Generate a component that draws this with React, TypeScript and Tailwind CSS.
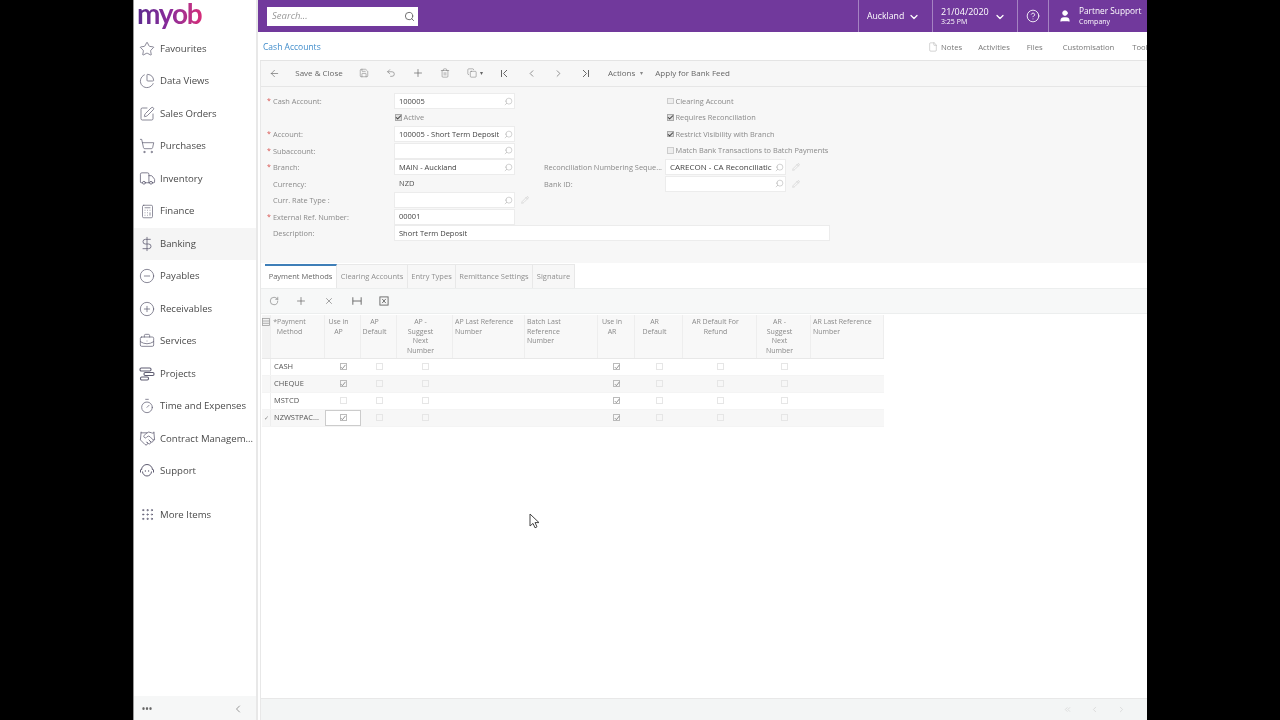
import React from "react";
import {
  Star, ChartPie, SquarePen, ShoppingCart, Truck, Calculator, DollarSign, CircleMinus, CirclePlus,
  BriefcaseBusiness, Timer, Handshake, Grip, Search, ChevronDown, CircleHelp, User, File, Save, Undo2, Plus,
  Trash2, Copy, ChevronsLeft, ChevronLeft, ChevronRight, ArrowLeft, RotateCw, X, Pencil, Check,
} from "lucide-react";

const ProjectsIcon = () => (
  <svg width="18" height="18" viewBox="0 0 18 18" fill="none" stroke="#5f5d72" strokeWidth="1.1">
    <rect x="2" y="3" width="11" height="3" rx="1.2" /><rect x="6" y="7.5" width="10" height="3" rx="1.2" /><rect x="2.5" y="12" width="8" height="3" rx="1.2" />
  </svg>
);
const SupportIcon = () => (
  <svg width="18" height="18" viewBox="0 0 18 18" fill="none" stroke="#5f5d72" strokeWidth="1">
    <path d="M3.5 8a5.5 5.5 0 0 1 11 0" /><path d="M4.5 9.5a4.5 4.5 0 0 0 9 0" /><path d="M2.5 7.5v3M15.5 7.5v3" />
    <circle cx="7.3" cy="9" r=".3" /><circle cx="10.7" cy="9" r=".3" />
  </svg>
);
const FitIcon = () => (
  <svg width="10" height="10" viewBox="0 0 12 12" fill="none" stroke="#666" strokeWidth="1.1"><path d="M1 1.5v9M11 1.5v9M1 6h10" /></svg>
);
const ExcelIcon = () => (
  <svg width="10" height="10" viewBox="0 0 11 11" fill="none" stroke="#666" strokeWidth="1"><rect x="1" y="1" width="9" height="9" /><path d="M3.5 3.2l4 4.6M7.5 3.2l-4 4.6" /></svg>
);
const GridMenuIcon = () => (
  <svg width="8" height="8" viewBox="0 0 8 8" fill="none" stroke="#a0a0a0" strokeWidth="0.8"><rect x=".5" y=".5" width="7" height="7" /><path d="M.5 3h7M.5 5.3h7" /></svg>
);

const navItems: [string, React.ReactNode, string?][] = [
  ["Favourites", <Star size={16} strokeWidth={1.1} />],
  ["Data Views", <ChartPie size={16} strokeWidth={1.1} />],
  ["Sales Orders", <SquarePen size={16} strokeWidth={1.1} />],
  ["Purchases", <ShoppingCart size={16} strokeWidth={1.1} />],
  ["Inventory", <Truck size={17} strokeWidth={1.1} />],
  ["Finance", <Calculator size={15} strokeWidth={1.1} />],
  ["Banking", <DollarSign size={16} strokeWidth={1.2} />, "bg-[#f5f5f5]"],
  ["Payables", <CircleMinus size={16} strokeWidth={1.1} />],
  ["Receivables", <CirclePlus size={16} strokeWidth={1.1} />],
  ["Services", <BriefcaseBusiness size={16} strokeWidth={1.1} />],
  ["Projects", <ProjectsIcon />],
  ["Time and Expenses", <Timer size={16} strokeWidth={1.1} />],
  ["Contract Managem...", <Handshake size={17} strokeWidth={1.1} />],
  ["Support", <SupportIcon />],
];

const NavRow = ({ label, icon, cls = "" }: { label: string; icon: React.ReactNode; cls?: string }) => (
  <div className={`flex h-[32.5px] shrink-0 items-center ${cls}`}>
    <span className="flex w-[26px] shrink-0 justify-center text-[#5f5d72]">{icon}</span>
    <span className="whitespace-nowrap text-[9.6px] text-[#4a4a4a]">{label}</span>
  </div>
);

const Sidebar = () => (
  <aside className="flex h-full w-[123px] shrink-0 flex-col border-l border-[#999] bg-white">
    <div className="flex h-[32.5px] shrink-0 items-center pb-[7px] pl-[3px]">
      <span className="bg-gradient-to-r from-[#5b2a8e] via-[#8a2a9a] to-[#d62b78] bg-clip-text font-['Lato',sans-serif] text-[28px] font-bold leading-[36px] tracking-[-1.2px] text-transparent">myob</span>
    </div>
    {navItems.map(([l, i, c]) => <NavRow key={l} label={l} icon={i} cls={c} />)}
    <div className="mt-[11px]"><NavRow label="More Items" icon={<Grip size={15} strokeWidth={1.3} />} /></div>
    <div className="mt-auto flex h-[24px] items-center justify-between bg-[#f6f7f7] pl-[8px] pr-[12px] pt-[1px] text-[#666]">
      <span className="text-[8px] font-bold leading-none tracking-[0.5px]">•••</span>
      <ChevronLeft size={12} strokeWidth={1.3} />
    </div>
  </aside>
);

const Header = () => (
  <header className="flex h-[32px] shrink-0 items-center bg-[#71399c] text-white">
    <div className="ml-[9px] flex h-[19px] w-[151px] items-center justify-between bg-white pl-[5px] pr-[3px]">
      <span className="text-[9.5px] italic text-[#999]">Search...</span>
      <Search size={11} className="text-[#666]" />
    </div>
    <div className="ml-[440px] flex h-full w-[74px] items-center border-l border-[#a583c2] pl-[8px] pt-[2px]">
      <span className="text-[8.7px]">Auckland</span>
      <ChevronDown size={12} strokeWidth={2.5} className="ml-[4px]" />
    </div>
    <div className="flex h-full w-[85px] items-center border-l border-[#a583c2] pl-[8px]">
      <div className="w-[53px] leading-none">
        <div className="text-[9px]">21/04/2020</div>
        <div className="mt-[2px] text-[7px]">3:25 PM</div>
      </div>
      <ChevronDown size={12} strokeWidth={2.5} className="mt-[2px]" />
    </div>
    <div className="flex h-full w-[32px] items-center justify-center border-x border-[#a583c2]">
      <CircleHelp size={14} strokeWidth={1.5} />
    </div>
    <div className="flex h-full flex-1 items-center overflow-hidden pl-[9px]">
      <User size={14} fill="white" strokeWidth={1.5} />
      <div className="ml-[7px] whitespace-nowrap leading-none">
        <div className="text-[8.3px]">Partner Support</div>
        <div className="mt-[2px] text-[7px]">Company</div>
      </div>
    </div>
  </header>
);

const TitleRow = () => (
  <div className="flex h-[29px] shrink-0 items-center overflow-hidden whitespace-nowrap border-b border-[#e4e4e4] bg-white pl-[3px] pt-[3px] text-[7.7px] text-[#777]">
    <span className="w-[665px] shrink-0 text-[8.5px] text-[#3f8ccb]">Cash Accounts</span>
    <div className="flex items-center">
      <File size={10} strokeWidth={1} className="text-[#999]" />
      <span className="ml-[3px]">Notes</span>
      <span className="ml-[16px]">Activities</span>
      <span className="ml-[17px]">Files</span>
      <span className="ml-[20px]">Customisation</span>
      <span className="ml-[18px]">Tools</span>
    </div>
  </div>
);

const TB = ({ children, w = "w-[27px]" }: { children: React.ReactNode; w?: string }) => (
  <span className={`flex ${w} shrink-0 items-center justify-center text-[#666]`}>{children}</span>
);

const Toolbar = () => (
  <div className="flex h-[26px] shrink-0 items-center border-b border-[#e6e6e6] pb-[1px] text-[8px] text-[#666]">
    <TB><ArrowLeft size={11} strokeWidth={1.4} /></TB>
    <TB w="w-[62px]"><span className="whitespace-nowrap text-[#666]">Save &amp; Close</span></TB>
    <TB><Save size={10} strokeWidth={1.1} /></TB>
    <TB><Undo2 size={10} strokeWidth={1.3} /></TB>
    <TB><Plus size={12} strokeWidth={1.4} /></TB>
    <TB><Trash2 size={10} strokeWidth={1.1} /></TB>
    <TB w="w-[33px]"><Copy size={10} strokeWidth={1.1} /><span className="ml-[3px] text-[6px]">▾</span></TB>
    <TB><svg width="9" height="9" viewBox="0 0 9 9" fill="none" stroke="currentColor" strokeWidth="1"><path d="M1.5 1v7M7 1 3.5 4.5 7 8" /></svg></TB>
    <TB><ChevronLeft size={11} strokeWidth={1.5} /></TB>
    <TB><ChevronRight size={11} strokeWidth={1.5} /></TB>
    <TB><svg width="9" height="9" viewBox="0 0 9 9" fill="none" stroke="currentColor" strokeWidth="1"><path d="M7.5 1v7M2 1l3.5 3.5L2 8" /></svg></TB>
    <span className="ml-[9px]">Actions</span>
    <span className="ml-[5px] text-[6px] text-[#888]">▾</span>
    <span className="ml-[12px]">Apply for Bank Feed</span>
  </div>
);

const Label = ({ text, req, cls = "w-[127px]" }: { text: string; req?: boolean; cls?: string }) => (
  <div className={`flex ${cls} shrink-0 items-center overflow-hidden whitespace-nowrap pt-[1px] text-[7.4px] text-[#8a8a8a]`}>
    <span className="w-[6px] shrink-0 text-[7px] text-[#d9534f]">{req ? "*" : ""}</span>
    <span>{text}</span>
  </div>
);

const Input = ({ value, search = true, w = "w-[121px]", pencil, txt = "text-[7.5px]" }: { value?: string; search?: boolean; w?: string; pencil?: boolean; txt?: string }) => (
  <>
    <div className={`flex h-[16px] ${w} shrink-0 items-center justify-between overflow-hidden border border-[#ececec] bg-white pl-[4px] pr-[1px]`}>
      <span className={`min-w-0 overflow-hidden whitespace-nowrap ${txt} text-[#444]`}>{value}</span>
      {search && <Search size={9} strokeWidth={1} className="ml-[1px] shrink-0 -scale-x-100 text-[#888]" />}
    </div>
    {pencil && <Pencil size={8} strokeWidth={1} className="ml-[6px] text-[#aaa]" />}
  </>
);

const Row = ({ children, cls = "" }: { children: React.ReactNode; cls?: string }) => (
  <div className={`flex h-[16.5px] items-center ${cls}`}>{children}</div>
);

const FormCheck = ({ on, text }: { on?: boolean; text: string }) => (
  <div className="flex items-center whitespace-nowrap text-[7.4px] text-[#8a8a8a]">
    <span className={`flex h-[6.5px] w-[6.5px] items-center justify-center border ${on ? "border-[#aaa] bg-[#ddd]" : "border-[#ccc] bg-[#eee]"}`}>
      {on && <Check size={7} strokeWidth={3.5} className="shrink-0 text-[#444]" />}
    </span>
    <span className="ml-[2px]">{text}</span>
  </div>
);

const Form = () => (
  <div className="flex h-[176px] shrink-0 flex-col pl-[6px] pt-[6px]">
    <div className="flex">
      <div className="w-[277px] shrink-0">
        <Row><Label req text="Cash Account:" /><Input value="100005" /></Row>
        <Row><span className="w-[128px]" /><FormCheck on text="Active" /></Row>
        <Row><Label req text="Account:" /><Input value="100005 - Short Term Deposit" /></Row>
        <Row><Label req text="Subaccount:" /><Input /></Row>
        <Row><Label req text="Branch:" /><Input value="MAIN - Auckland" /></Row>
        <Row><Label text="Currency:" /><span className="pl-[5px] text-[7.5px] text-[#555]">NZD</span></Row>
        <Row><Label text="Curr. Rate Type :" /><Input pencil /></Row>
        <Row><Label req text="External Ref. Number:" /><Input value="00001" search={false} /></Row>
      </div>
      <div className="min-w-0 flex-1">
        <Row cls="pl-[123px]"><FormCheck text="Clearing Account" /></Row>
        <Row cls="pl-[123px]"><FormCheck on text="Requires Reconciliation" /></Row>
        <Row cls="pl-[123px]"><FormCheck on text="Restrict Visibility with Branch" /></Row>
        <Row cls="pl-[123px]"><FormCheck text="Match Bank Transactions to Batch Payments" /></Row>
        <Row><Label text="Reconciliation Numbering Seque..." cls="ml-[-6px] w-[127px]" /><Input value="CARECON - CA Reconciliatic" txt="text-[8px]" pencil /></Row>
        <Row><Label text="Bank ID:" cls="ml-[-6px] w-[127px]" /><Input pencil /></Row>
      </div>
    </div>
    <Row><Label text="Description:" /><Input value="Short Term Deposit" search={false} w="w-[436px]" /></Row>
  </div>
);

const tabs: [string, string][] = [
  ["Payment Methods", "w-[72px]"], ["Clearing Accounts", "w-[71px]"], ["Entry Types", "w-[48px]"],
  ["Remittance Settings", "w-[77px]"], ["Signature", "w-[42px]"],
];

const Tabs = () => (
  <div className="flex h-[25px] shrink-0 items-end bg-white pl-[4px]">
    {tabs.map(([t, w], i) => (
      <div key={t} className={`flex h-[24px] ${w} items-center justify-center whitespace-nowrap border-r border-[#e8e8e8] text-[7.5px] ${i === 0 ? "border-t-2 border-t-[#3f7fb8] bg-white text-[#666]" : "border-t border-t-[#e8e8e8] bg-[#f7f7f7] text-[#8f8f8f]"}`}>{t}</div>
    ))}
  </div>
);

const GridToolbar = () => (
  <div className="flex h-[26px] shrink-0 items-center border-y border-[#eceeee] bg-[#f7f8f8]">
    <TB w="w-[26px]"><RotateCw size={10} strokeWidth={1.3} /></TB>
    <TB w="w-[28px]"><Plus size={12} strokeWidth={1.4} /></TB>
    <TB w="w-[28px]"><X size={10} strokeWidth={1.4} /></TB>
    <TB w="w-[28px]"><FitIcon /></TB>
    <TB w="w-[26px]"><ExcelIcon /></TB>
  </div>
);

const COLS = "grid w-[622px] grid-cols-[9px_54px_36px_36px_56px_72px_73px_37px_48px_74px_54px_73px]";

const Hd = ({ t, cls = "pl-[1px] pr-[9px] text-center" }: { t: string; cls?: string }) => (
  <div className={`h-[43px] whitespace-pre-line border-r border-[#eee] bg-[#f8f8f8] pt-[2px] text-[7px] leading-[9.7px] text-[#8a8a8a] ${cls}`}>{t}</div>
);

const Tick = () => (
  <svg width="6" height="6" viewBox="0 0 6 6" fill="none" stroke="#888" strokeWidth="0.9" className="shrink-0"><path d="M0.8 3.1 2.4 4.7 5.4 0.9" /></svg>
);

const Cb = ({ on, focus }: { on?: boolean; focus?: boolean }) => (
  <div className={`flex items-center justify-center pb-[1px] ${focus ? "border border-[#ccc] bg-white" : ""}`}>
    <span className={`flex h-[7px] w-[7px] items-center justify-center border ${on ? "border-[#bbb]" : "border-[#e6e6e6]"}`}>
      {on && <Tick />}
    </span>
  </div>
);

const rows: { n: string; ap: boolean; alt: boolean; sel?: boolean }[] = [
  { n: "CASH", ap: true, alt: false },
  { n: "CHEQUE", ap: true, alt: true },
  { n: "MSTCD", ap: false, alt: false },
  { n: "NZWSTPAC...", ap: true, alt: true, sel: true },
];

const LEFT = "pl-[2px] text-left";

const Grid = () => (
  <div className="pl-[1px] pt-[1px]">
    <div className={`${COLS} border-b border-[#e8e8e8]`}>
      <div className="flex h-[43px] justify-center border-r border-[#eee] bg-[#f3f3f3] pt-[3px]"><GridMenuIcon /></div>
      <Hd t={"*Payment\nMethod"} cls="pr-[16px] text-center" />
      <Hd t={"Use in\nAP"} />
      <Hd t={"AP\nDefault"} />
      <Hd t={"AP -\nSuggest\nNext\nNumber"} />
      <Hd t={"AP Last Reference\nNumber"} cls={LEFT} />
      <Hd t={"Batch Last\nReference\nNumber"} cls={LEFT} />
      <Hd t={"Use in\nAR"} />
      <Hd t={"AR\nDefault"} />
      <Hd t={"AR Default For\nRefund"} />
      <Hd t={"AR -\nSuggest\nNext\nNumber"} />
      <Hd t={"AR Last Reference\nNumber"} cls={LEFT} />
    </div>
    {rows.map((r) => (
      <div key={r.n} className={`${COLS} h-[17px] border-b border-[#f4f4f4] ${r.alt ? "bg-[#f7f7f7]" : "bg-white"}`}>
        <div className="flex items-center justify-center border-r border-[#eee] text-[6px] text-[#888]">{r.sel ? "✓" : ""}</div>
        <div className="flex items-center overflow-hidden whitespace-nowrap pl-[3px] text-[7.5px] text-[#555]">{r.n}</div>
        <Cb on={r.ap} focus={r.sel} />
        <Cb />
        <Cb />
        <div />
        <div />
        <Cb on />
        <Cb />
        <Cb />
        <Cb />
        <div />
      </div>
    ))}
  </div>
);

const Cursor = () => (
  <svg className="absolute left-[396px] top-[513px]" width="12" height="16" viewBox="0 0 12 16">
    <path d="M1 1v12l3-2.6 2 4.4 2-1-2-4.2h4z" fill="white" stroke="#444" strokeWidth="1" />
  </svg>
);

export default function App() {
  return (
    <div className="flex h-[720px] w-[1280px] overflow-hidden bg-black font-['Open_Sans',sans-serif] blur-[0.3px]">
      <div className="w-[133px] shrink-0" />
      <div className="relative flex h-full w-[1014px] shrink-0 bg-white">
        <Sidebar />
        <div className="h-full w-[2px] shrink-0 bg-[#e8e8e8]" />
        <main className="flex h-full min-w-0 flex-1 flex-col">
          <Header />
          <div className="flex min-h-0 flex-1 flex-col pl-[2px]">
            <TitleRow />
            <div className="flex min-h-0 flex-1 flex-col border-l border-[#e8e8e8]">
              <div className="bg-[#f7f7f7]">
                <Toolbar />
                <Form />
              </div>
              <Tabs />
              <GridToolbar />
              <div className="min-h-0 flex-1"><Grid /></div>
              <div className="flex h-[22px] shrink-0 items-center justify-end gap-[18px] border-t border-[#e8e8e8] bg-[#f3f5f5] pr-[21px] text-[#d4d4d4]">
                <ChevronsLeft size={9} /><ChevronLeft size={9} /><ChevronRight size={9} />
              </div>
            </div>
          </div>
        </main>
        <Cursor />
      </div>
      <div className="flex-1" />
    </div>
  );
}
